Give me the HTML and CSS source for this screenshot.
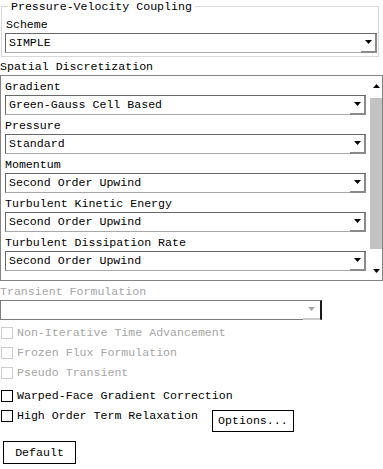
FILE: index.html
```html
<!DOCTYPE html>
<html>
<head>
<meta charset="utf-8">
<link rel="stylesheet" href="styles.css">
</head>
<body>
<fieldset class="group">
  <legend class="legend">Pressure-Velocity Coupling</legend>
  <div class="label first">Scheme</div>
  <div class="select">
    <span class="value">SIMPLE</span>
    <span class="drop"><svg width="7" height="4" viewBox="0 0 7 4"><polygon points="0,0 7,0 3.5,4" fill="#000"/></svg></span>
  </div>
</fieldset>

<div class="section-title">Spatial Discretization</div>
<div class="scrollbox">
  <div class="scroll-content">
    <div class="label">Gradient</div>
    <div class="select">
      <span class="value">Green-Gauss Cell Based</span>
      <span class="drop"><svg width="7" height="4" viewBox="0 0 7 4"><polygon points="0,0 7,0 3.5,4" fill="#000"/></svg></span>
    </div>
    <div class="label">Pressure</div>
    <div class="select">
      <span class="value">Standard</span>
      <span class="drop"><svg width="7" height="4" viewBox="0 0 7 4"><polygon points="0,0 7,0 3.5,4" fill="#000"/></svg></span>
    </div>
    <div class="label">Momentum</div>
    <div class="select">
      <span class="value">Second Order Upwind</span>
      <span class="drop"><svg width="7" height="4" viewBox="0 0 7 4"><polygon points="0,0 7,0 3.5,4" fill="#000"/></svg></span>
    </div>
    <div class="label">Turbulent Kinetic Energy</div>
    <div class="select">
      <span class="value">Second Order Upwind</span>
      <span class="drop"><svg width="7" height="4" viewBox="0 0 7 4"><polygon points="0,0 7,0 3.5,4" fill="#000"/></svg></span>
    </div>
    <div class="label">Turbulent Dissipation Rate</div>
    <div class="select">
      <span class="value">Second Order Upwind</span>
      <span class="drop"><svg width="7" height="4" viewBox="0 0 7 4"><polygon points="0,0 7,0 3.5,4" fill="#000"/></svg></span>
    </div>
  </div>
  <div class="scrollbar">
    <div class="sb-up"><svg width="7" height="4" viewBox="0 0 7 4"><polygon points="0,4 7,4 3.5,0" fill="#000"/></svg></div>
    <div class="sb-thumb"></div>
    <div class="sb-down"><svg width="7" height="4" viewBox="0 0 7 4"><polygon points="0,0 7,0 3.5,4" fill="#000"/></svg></div>
  </div>
</div>

<div class="section-title disabled-text transient">Transient Formulation</div>
<div class="select disabled">
  <span class="value"></span>
  <span class="drop"><svg width="7" height="4" viewBox="0 0 7 4"><polygon points="0,0 7,0 3.5,4" fill="#a8a8a8"/></svg></span>
</div>

<div class="checks">
  <div class="check-row disabled-text"><span class="box"></span><span class="check-text">Non-Iterative Time Advancement</span></div>
  <div class="check-row disabled-text"><span class="box"></span><span class="check-text">Frozen Flux Formulation</span></div>
  <div class="check-row disabled-text"><span class="box"></span><span class="check-text">Pseudo Transient</span></div>
  <div class="check-row enabled gap"><span class="box"></span><span class="check-text">Warped-Face Gradient Correction</span></div>
  <div class="check-row enabled"><span class="box"></span><span class="check-text">High Order Term Relaxation</span><span class="button options">Options...</span></div>
</div>

<div class="button default">Default</div>
</body>
</html>
```

FILE: styles.css
```css
* { box-sizing: border-box; }

html, body {
  margin: 0;
  padding: 0;
  background: #fff;
}

body {
  font-family: "Liberation Mono", "DejaVu Sans Mono", monospace;
  font-size: 11.6px;
  color: #000;
  width: 383px;
  height: 469px;
  overflow: hidden;
}

.group {
  margin: 0 0 0 1px;
  width: 378px;
  border: 1px solid #d8d8d8;
  padding: 0 1px 3px 3px;
  min-width: 0;
}

.legend {
  margin-left: 3px;
  padding: 0 3px 0 3px;
  line-height: 13px;
  height: 12px;
}

.label {
  line-height: 17px;
  height: 19px;
  padding-top: 2px;
  white-space: nowrap;
}

.label.first {
  padding-left: 1px;
  padding-top: 4px;
  line-height: 17px;
  height: 21px;
}

.select {
  display: flex;
  height: 20px;
  width: 100%;
  border-top: 1px solid #686868;
  border-left: 1px solid #686868;
  border-bottom: 1px solid #a8a8a8;
  background: #fff;
}

.select .value {
  flex: 1;
  padding-left: 3px;
  line-height: 18px;
  white-space: nowrap;
}

.select .drop {
  width: 16px;
  display: flex;
  align-items: center;
  justify-content: center;
  border-right: 2px solid #8a8a8a;
  border-bottom: 2px solid #8a8a8a;
  margin-bottom: -1px;
  padding-bottom: 1px;
}

.section-title {
  line-height: 17px;
  height: 18px;
  padding-top: 1px;
  white-space: nowrap;
}

.scrollbox {
  display: flex;
  width: 383px;
  height: 206px;
  border: 1px solid #848484;
  overflow: hidden;
}

.scroll-content {
  flex: 1;
  padding: 0 3px 0 4px;
}

.scrollbar {
  width: 13px;
  padding-left: 1px;
  display: flex;
  flex-direction: column;
}

.sb-up {
  height: 22px;
  display: flex;
  justify-content: center;
  align-items: flex-start;
  padding-top: 8px;
}

.sb-thumb {
  height: 151px;
  background: #c2c2c2;
}

.sb-down {
  flex: 1;
  display: flex;
  justify-content: center;
  align-items: flex-start;
  padding-top: 20px;
}

.disabled-text {
  color: #a6a6a6;
}

.transient {
  height: 19px;
  line-height: 16px;
  padding-top: 3px;
}

.select.disabled {
  width: 322px;
  border-top: 1px solid #7c7c7c;
  border-left: 1px solid #7c7c7c;
  border-bottom: 1px solid #7c7c7c;
  border-right: 2px solid #1a1a1a;
}

.select.disabled .drop {
  border-right: none;
  border-bottom: 2px solid #cfcfcf;
  width: 17px;
}

.checks {
  margin-top: 5px;
}

.check-row {
  display: flex;
  align-items: flex-start;
  height: 20px;
  white-space: nowrap;
}

.check-row.gap {
  margin-top: 3px;
}

.check-row .box {
  width: 12px;
  height: 12px;
  margin: 2px 4px 0 1px;
  border: 1px solid #000;
  background: #fff;
}

.check-row.disabled-text .box {
  border-color: #cccccc;
}

.check-text {
  line-height: 16px;
}

.button {
  display: inline-block;
  border: 1px solid #000;
  background: #fff;
  text-align: center;
  white-space: nowrap;
}

.options {
  margin-left: 14px;
  margin-top: 2px;
  width: 82px;
  height: 22px;
  line-height: 20px;
}

.default {
  display: block;
  margin: 13px 0 0 3px;
  width: 73px;
  height: 23px;
  line-height: 21px;
}
```
